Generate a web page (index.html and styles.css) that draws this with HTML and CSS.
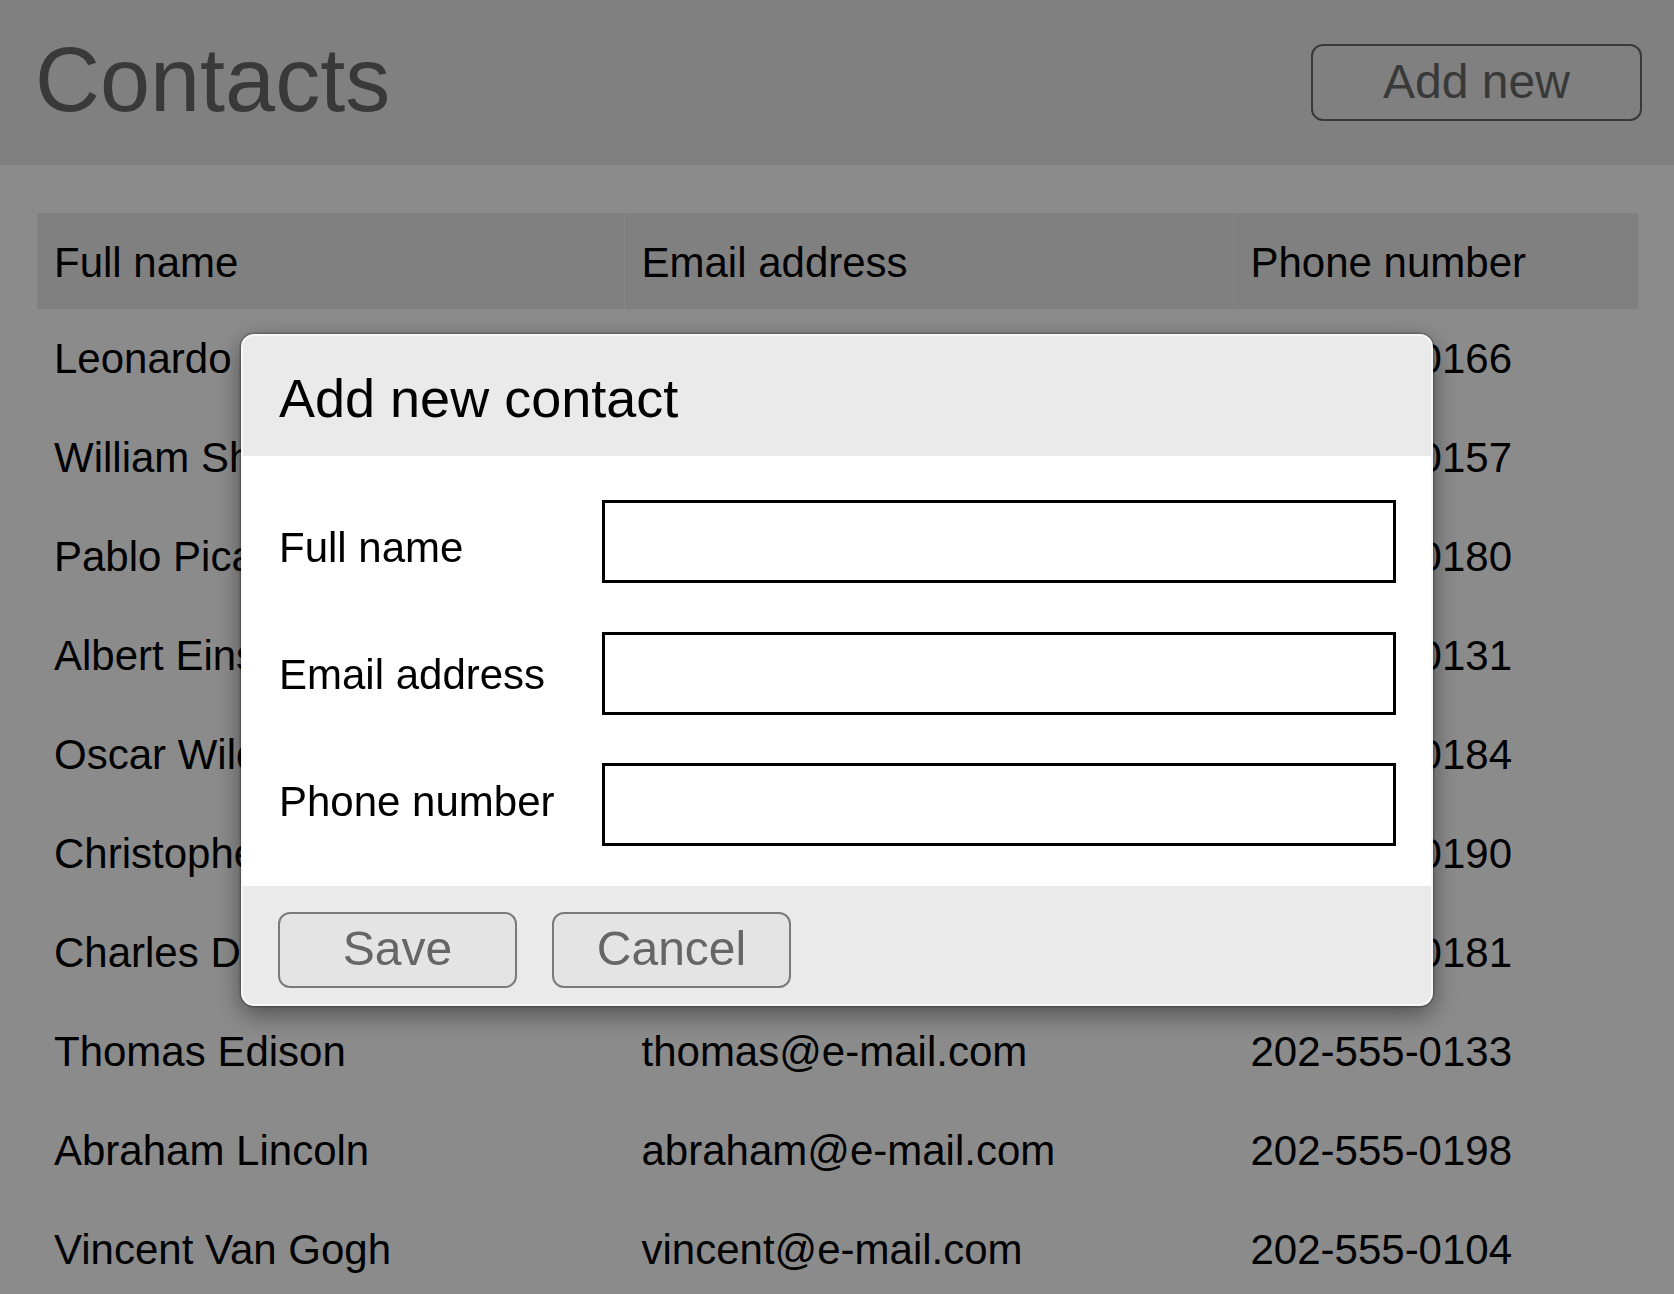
FILE: index.html
```html
<!DOCTYPE html>
<html lang="en">
<head>
<meta charset="utf-8">
<title>Contacts</title>
<link rel="stylesheet" href="styles.css">
</head>
<body>
<header class="topbar">
  <h1 class="title">Contacts</h1>
  <button class="btn-add" type="button">Add new</button>
</header>
<main class="content">
  <table class="contacts">
    <colgroup>
      <col class="col-name">
      <col class="col-email">
      <col class="col-phone">
    </colgroup>
    <thead>
      <tr><th>Full name</th><th>Email address</th><th>Phone number</th></tr>
    </thead>
    <tbody>
      <tr><td>Leonardo da Vinci</td><td>leonardo@e-mail.com</td><td>202-555-0166</td></tr>
      <tr><td>William Shakespeare</td><td>william@e-mail.com</td><td>202-555-0157</td></tr>
      <tr><td>Pablo Picasso</td><td>pablo@e-mail.com</td><td>202-555-0180</td></tr>
      <tr><td>Albert Einstein</td><td>albert@e-mail.com</td><td>202-555-0131</td></tr>
      <tr><td>Oscar Wilde</td><td>oscar@e-mail.com</td><td>202-555-0184</td></tr>
      <tr><td>Christopher Columbus</td><td>christopher@e-mail.com</td><td>202-555-0190</td></tr>
      <tr><td>Charles Darwin</td><td>charles@e-mail.com</td><td>202-555-0181</td></tr>
      <tr><td>Thomas Edison</td><td>thomas@e-mail.com</td><td>202-555-0133</td></tr>
      <tr><td>Abraham Lincoln</td><td>abraham@e-mail.com</td><td>202-555-0198</td></tr>
      <tr><td>Vincent Van Gogh</td><td>vincent@e-mail.com</td><td>202-555-0104</td></tr>
    </tbody>
  </table>
</main>
<div class="overlay"></div>
<div class="modal" role="dialog" aria-labelledby="modal-title">
  <div class="modal-head">
    <h2 class="modal-title" id="modal-title">Add new contact</h2>
  </div>
  <div class="modal-body">
    <div class="labels">
      <label class="field-label" for="f-name">Full name</label>
      <label class="field-label" for="f-email">Email address</label>
      <label class="field-label" for="f-phone">Phone number</label>
    </div>
    <div class="inputs">
      <input class="field-input" id="f-name" type="text">
      <input class="field-input" id="f-email" type="text">
      <input class="field-input" id="f-phone" type="text">
    </div>
  </div>
  <div class="modal-foot">
    <button class="btn-foot" type="button">Save</button>
    <button class="btn-foot" type="button">Cancel</button>
  </div>
</div>
</body>
</html>
```
FILE: styles.css
```css
html, body {
  margin: 0;
  padding: 0;
  height: 100%;
  overflow: hidden;
}
body {
  background: #ffffff;
  font-family: "Liberation Sans", Arial, Helvetica, sans-serif;
  color: #000;
}
.topbar {
  background: #ebebeb;
  height: 165px;
  box-sizing: border-box;
  padding: 28px 32px 0 35px;
  display: flex;
  justify-content: space-between;
  align-items: flex-start;
}
.title {
  margin: 0;
  font-size: 90px;
  line-height: 104px;
  font-weight: normal;
  color: #6a6a6a;
}
.btn-add {
  margin-top: 16px;
  width: 331px;
  height: 77px;
  box-sizing: border-box;
  border: 2px solid #6a6a6a;
  border-radius: 12px;
  background: transparent;
  color: #6a6a6a;
  font-family: inherit;
  font-size: 48px;
  line-height: 55px;
  padding: 8px 0 10px;
  text-align: center;
}
.content {
  padding: 48px 36px 0 37px;
}
.contacts {
  width: 1601px;
  border-collapse: collapse;
  font-size: 42px;
  line-height: 48px;
}
.col-name { width: 587px; }
.col-email { width: 609px; }
.contacts th {
  background: #ebebeb;
  font-weight: normal;
  text-align: left;
  padding: 26px 17px 22px;
  border-left: 1px solid #f7f7f7;
}
.contacts th:first-child { border-left: none; padding-left: 17px; }
.contacts td {
  text-align: left;
  padding: 26px 17px 25px;
  border-left: 1px solid transparent;
  white-space: nowrap;
}
.contacts td:first-child { border-left: none; }
.overlay {
  position: fixed;
  inset: 0;
  background: rgba(0, 0, 0, 0.455);
}
.modal {
  position: fixed;
  top: 334px;
  left: 241px;
  width: 1192px;
  box-sizing: border-box;
  border: 2px solid #f8f8f8;
  border-radius: 13px;
  background: #fff;
  overflow: hidden;
  box-shadow: 0 0 0 1.5px rgba(0, 0, 0, 0.22), 0 8px 26px rgba(0, 0, 0, 0.45);
}
.modal-head {
  background: #eaeaea;
  height: 120px;
  box-sizing: border-box;
  padding: 31px 37px 27px 36px;
}
.modal-title {
  margin: 0;
  font-size: 54px;
  line-height: 62px;
  font-weight: normal;
}
.modal-body {
  display: flex;
  padding: 0 35px 0 36px;
  height: 430px;
  box-sizing: border-box;
}
.labels {
  width: 323px;
  flex: none;
  display: flex;
  flex-direction: column;
  gap: 79px;
  padding-top: 68px;
}
.field-label {
  font-size: 42px;
  line-height: 48px;
}
.inputs {
  flex: 1;
  display: flex;
  flex-direction: column;
  gap: 48.5px;
  padding-top: 44px;
}
.field-input {
  height: 83px;
  box-sizing: border-box;
  border: 3px solid #000;
  background: #fff;
  margin: 0;
  padding: 0 12px;
  font-family: inherit;
  font-size: 42px;
  outline: none;
  border-radius: 0;
}
.modal-foot {
  background: #eaeaea;
  padding: 26px 37px 16px 35px;
  display: flex;
  gap: 35px;
}
.btn-foot {
  width: 239px;
  height: 76px;
  box-sizing: border-box;
  border: 2px solid #7a7a7a;
  border-radius: 12px;
  background: #e4e4e4;
  color: #666;
  font-family: inherit;
  font-size: 48px;
  line-height: 55px;
  padding: 0 0 4px;
  text-align: center;
}
```
